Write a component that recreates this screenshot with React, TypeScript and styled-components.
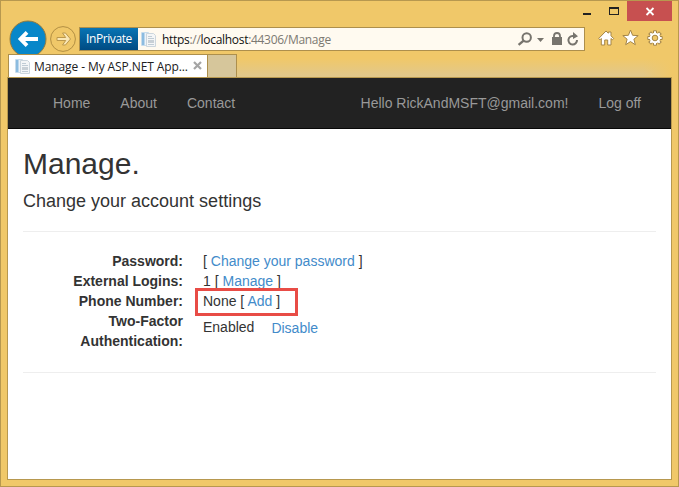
import React from "react";
import styled, { createGlobalStyle } from "styled-components";

const GlobalStyle = createGlobalStyle`
  * { box-sizing: border-box; }
  body { margin: 0; overflow: hidden; }
`;

const Window = styled.div`
  display: flex;
  flex-direction: column;
  width: 679px;
  height: 487px;
  padding: 0 6px 6px 6px;
  border: 1px solid #b7984f;
  background: #f0c869;
  font-family: "Open Sans", "Noto Sans", sans-serif;
`;

const TitleBar = styled.div`
  display: flex;
  justify-content: flex-end;
  flex: none;
  height: 20px;
`;

const WindowButton = styled.button<{ $width: number; $danger?: boolean }>`
  display: block;
  width: ${(p) => p.$width}px;
  height: 20px;
  padding: 0;
  border: 0;
  background: ${(p) => (p.$danger ? "#c75050" : "transparent")};
  svg { display: block; }
`;

const Toolbar = styled.div`
  display: flex;
  align-items: flex-start;
  flex: none;
  height: 33px;
  padding-left: 2px;
`;

const NavButton = styled.button<{ $size: number; $top: number; $gap: number }>`
  flex: none;
  width: ${(p) => p.$size}px;
  height: ${(p) => p.$size}px;
  margin: ${(p) => p.$top}px ${(p) => p.$gap}px 0 0;
  padding: 0;
  border: 0;
  background: transparent;
  svg { display: block; }
`;

const AddressBar = styled.div`
  display: flex;
  align-items: center;
  flex: none;
  width: 506px;
  height: 24px;
  margin-top: 6px;
  border: 1px solid #ad8f4c;
  background: #fffaf0;
`;

const PrivateBadge = styled.div`
  width: 58px;
  height: 22px;
  padding-left: 6px;
  background: linear-gradient(#0874b4, #004b83);
  color: #fff;
  font-size: 12px;
  line-height: 22px;
  letter-spacing: -0.4px;
  white-space: nowrap;
`;

const Url = styled.div`
  flex: 1;
  padding: 1px 0 0 5px;
  color: #7c7972;
  font-size: 12px;
  line-height: 22px;
  letter-spacing: -0.3px;
  white-space: nowrap;
`;

const UrlStrong = styled.span`
  color: #111;
`;

const AddressTools = styled.div`
  display: flex;
  width: 70px;
  height: 22px;
`;

const Favicon = styled.svg`
  flex: none;
  display: block;
`;

const BrowserTools = styled.div`
  display: flex;
  gap: 4px;
  margin: 6px 0 0 11px;
`;

const TabStrip = styled.div`
  position: relative;
  display: flex;
  flex: none;
  height: 23px;
  margin-left: 1px;
  background: linear-gradient(90deg, transparent 635px, #f0c869 664px),
    linear-gradient(#f0c869 20%, #e2c889 90%);
`;

const Tab = styled.div`
  display: flex;
  align-items: center;
  width: 200px;
  padding-left: 5px;
  border: 1px solid #ad8f4c;
  border-bottom: 0;
  background: #fff;
`;

const TabTitle = styled.div`
  flex: 1;
  padding: 1px 0 0 3px;
  color: #202020;
  font-size: 12px;
  line-height: 22px;
  letter-spacing: -0.1px;
  white-space: nowrap;
`;

const NewTab = styled.div`
  width: 29px;
  border: 1px solid #ad8f4c;
  border-width: 1px 1px 0 0;
  background: #d6c69b;
`;

const Page = styled.main`
  flex: 1;
  min-height: 0;
  border: 1px solid #b7984f;
  background: #fff;
  color: #333;
  font: 14px/20px "Liberation Sans", Arial, sans-serif;
`;

const NavBar = styled.nav`
  display: flex;
  justify-content: space-between;
  height: 51px;
  padding: 0 15px 0 30px;
  border-bottom: 1px solid #080808;
  background: #222;
`;

const NavGroup = styled.div`
  display: flex;
`;

const NavLink = styled.a`
  padding: 15px;
  color: #999;
  white-space: nowrap;
`;

const Content = styled.div`
  padding: 18px 15px 0;
`;

const Heading = styled.h2`
  margin: 0 0 11px;
  font-size: 30px;
  font-weight: 400;
  line-height: 33px;
`;

const SubHeading = styled.h4`
  margin: 0;
  font-size: 18px;
  font-weight: 400;
  line-height: 21px;
`;

const Rule = styled.hr`
  margin: 19px 0;
  border: 0;
  border-top: 1px solid #eee;
`;

const Settings = styled.dl`
  display: grid;
  grid-template-columns: 160px 1fr;
  column-gap: 20px;
  margin: 0 0 21px;
`;

const Term = styled.dt`
  font-weight: 700;
  text-align: right;
`;

const Value = styled.dd<{ $top?: number }>`
  position: relative;
  margin: 0;
  padding-top: ${(p) => p.$top ?? 0}px;
  white-space: nowrap;
`;

const Link = styled.a`
  color: #428bca;
`;

const DisableLink = styled(Link)`
  display: inline-block;
  margin-left: 17px;
  padding-top: 1px;
  vertical-align: top;
`;

const Highlight = styled.div`
  position: absolute;
  top: -3px;
  left: -8px;
  width: 103px;
  height: 28px;
  border: 3px solid #e84c46;
`;

const PageIcon = () => (
  <Favicon width="17" height="18" viewBox="0 0 17 18">
    <path d="M1.5 2.5h7v13h-7z" fill="#eef4f9" stroke="#c7dcec" />
    <path d="M2 3h2.5v12H2z" fill="#8cbce0" />
    <path d="M6.5 3.5h7l2 2v11h-9z" fill="#f4f6f7" stroke="#ccd6dd" />
    <path d="M8 6.5h4M8 8.5h6M8 14.5h6" stroke="#c0ccd5" />
    <path d="M8 10h6v3H8z" fill="#c8d0d6" />
  </Favicon>
);

const links = ["Home", "About", "Contact"];
const accountLinks = ["Hello RickAndMSFT@gmail.com!", "Log off"];

export default function App() {
  return (
    <>
      <GlobalStyle />
      <Window>
        <TitleBar>
          <WindowButton $width={26} aria-label="Minimize">
            <svg width="26" height="20"><path d="M8 12h8v2H8z" fill="#222" /></svg>
          </WindowButton>
          <WindowButton $width={26} aria-label="Maximize">
            <svg width="26" height="20">
              <path d="M8 6h10v8H8zM9 8v5h8V8z" fill="#222" fillRule="evenodd" />
            </svg>
          </WindowButton>
          <WindowButton $width={45} $danger aria-label="Close">
            <svg width="45" height="20"><path d="M19.5 7l7 7M26.5 7l-7 7" stroke="#fff" strokeWidth="1.8" /></svg>
          </WindowButton>
        </TitleBar>
        <Toolbar>
          <NavButton $size={38} $top={-1} $gap={3} aria-label="Back">
            <svg width="38" height="38">
              <circle cx="19" cy="19" r="18" fill="#0787c9" stroke="#957b3d" />
              <path d="M18 12.4l-6.5 6.6 6.5 6.6M12 19h17" fill="none" stroke="#fff" strokeWidth="3.8" />
            </svg>
          </NavButton>
          <NavButton $size={27} $top={4} $gap={2} aria-label="Forward">
            <svg width="27" height="27">
              <circle cx="13" cy="14" r="12.4" fill="none" stroke="#b28f43" />
              <path d="M12.5 8h3l5 6-5 6h-3l3.2-4.5H7v-3h8.7z" fill="#fae7b5" stroke="#bb984c" />
            </svg>
          </NavButton>
          <AddressBar>
            <PrivateBadge>InPrivate</PrivateBadge>
            <svg width="2" height="18" />
            <PageIcon />
            <Url>
              <UrlStrong>https</UrlStrong>://<UrlStrong>localhost</UrlStrong>:44306/Manage
            </Url>
            <AddressTools>
              <svg width="70" height="22">
                <circle cx="12.7" cy="9.5" r="4.2" fill="none" stroke="#77746d" strokeWidth="2" />
                <path d="M9.6 12.6l-5 4.2" stroke="#77746d" strokeWidth="2.4" />
                <path d="M23 10h7l-3.5 4z" fill="#77746d" />
                <path d="M38 9h10v8H38z" fill="#77746d" />
                <path d="M40 9V8a3 3 0 0 1 6 0v1" fill="none" stroke="#77746d" strokeWidth="1.8" />
                <path d="M60 8.1a4.3 4.3 0 1 0 3 3.9" fill="none" stroke="#77746d" strokeWidth="2" />
                <path d="M59 4l5 4.3-5 2.6z" fill="#77746d" />
              </svg>
            </AddressTools>
          </AddressBar>
          <BrowserTools>
            <svg width="20" height="22">
              <path d="M2.7 11.5L10 4l2.3 2.2V5H15v3.8l2.6 2.7-1.2 1.3-1.4-1.3V18h-3.3v-5H8.7v5H5.3v-6.5L4 12.8z" fill="#fff" stroke="#a48546" />
            </svg>
            <svg width="21" height="22">
              <path d="M10.5 3l2.1 5.3 5.6.3-4.3 3.6 1.4 5.5-4.8-3.1-4.8 3.1 1.4-5.5-4.3-3.6 5.6-.3z" fill="#fff" stroke="#a48546" />
            </svg>
            <svg width="20" height="22" viewBox="-10 -11 20 22">
              {[0, 45, 90, 135].map((a) => (
                <path key={a} d="M-1.5-7.2h3V7.2h-3z" fill="#fff" stroke="#a48546" transform={`rotate(${a})`} />
              ))}
              <circle r="5.3" fill="#fff" />
              <circle r="2.8" fill="#f0c869" stroke="#a48546" />
            </svg>
          </BrowserTools>
        </Toolbar>
        <TabStrip>
          <Tab>
            <PageIcon />
            <TabTitle>Manage - My ASP.NET App...</TabTitle>
            <svg width="20" height="20"><path d="M6 6l7 7M13 6l-7 7" stroke="#a5a5a5" strokeWidth="2.2" /></svg>
          </Tab>
          <NewTab />
        </TabStrip>
        <Page>
          <NavBar>
            <NavGroup>{links.map((t) => <NavLink key={t}>{t}</NavLink>)}</NavGroup>
            <NavGroup>{accountLinks.map((t) => <NavLink key={t}>{t}</NavLink>)}</NavGroup>
          </NavBar>
          <Content>
            <Heading>Manage.</Heading>
            <SubHeading>Change your account settings</SubHeading>
            <Rule />
            <Settings>
              <Term>Password:</Term>
              <Value>[ <Link>Change your password</Link> ]</Value>
              <Term>External Logins:</Term>
              <Value>1 [ <Link>Manage</Link> ]</Value>
              <Term>Phone Number:</Term>
              <Value>None [ <Link>Add</Link> ]<Highlight /></Value>
              <Term>Two-Factor Authentication:</Term>
              <Value $top={6}>Enabled<DisableLink>Disable</DisableLink></Value>
            </Settings>
            <Rule />
          </Content>
        </Page>
      </Window>
    </>
  );
}
